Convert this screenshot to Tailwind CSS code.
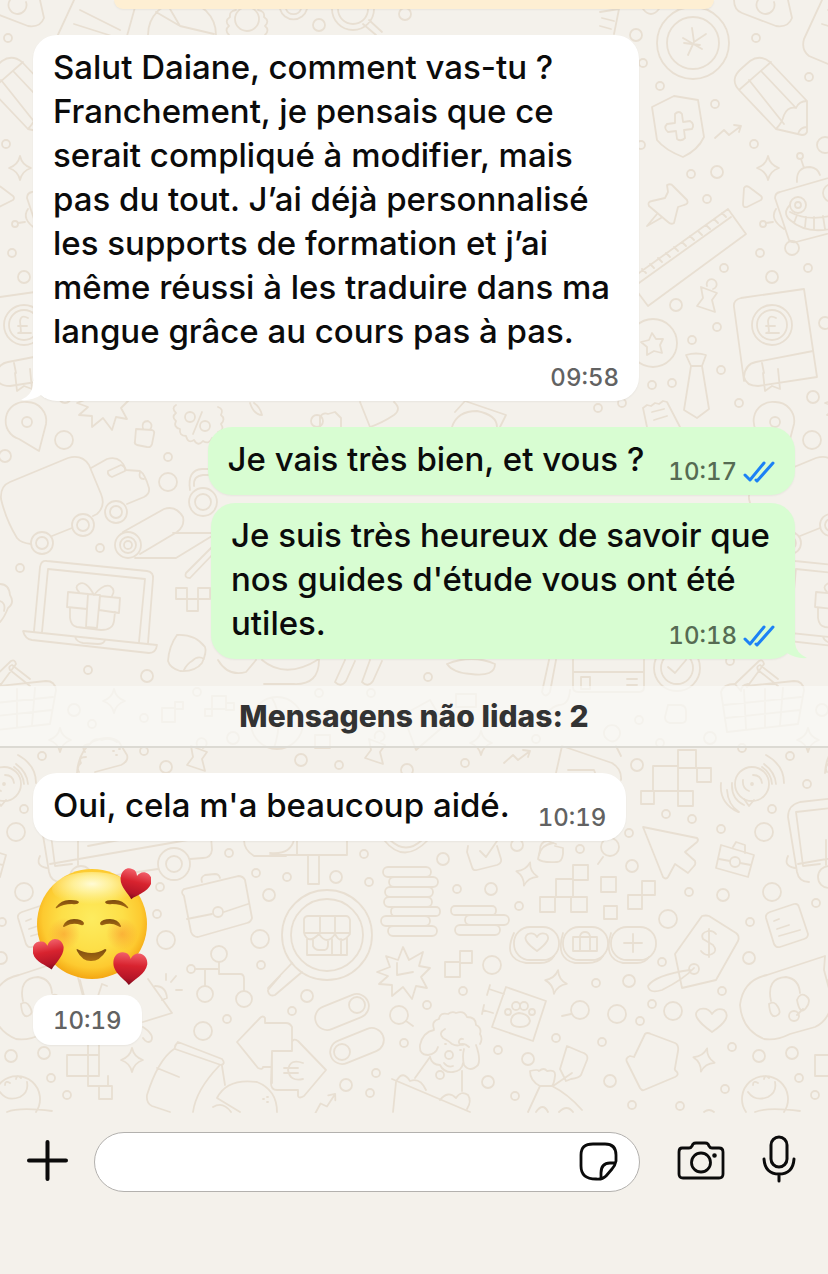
<!DOCTYPE html>
<html lang="pt">
<head>
  <meta charset="UTF-8" />
  <meta name="viewport" content="width=device-width, initial-scale=1.0" />
  <title>Conversa</title>
  <script src="https://cdn.jsdelivr.net/npm/@tailwindcss/browser@4"></script>
</head>
<body class="font-['Inter',sans-serif] antialiased bg-[#f4f1eb] text-[#0b0b0b]">
  <div class="min-h-screen flex flex-col">

    <main class="relative flex-1 overflow-hidden pb-[68px]">

      <!-- Wallpaper -->
      <svg class="absolute inset-0 w-full h-full" fill="none" stroke="#e8dfd2" stroke-width="1.800" stroke-linejoin="round" stroke-linecap="round" aria-hidden="true">
        <defs>
          <path id="spark" d="M0-12Q2-3 11 0Q2 3 0 12Q-2 3-11 0Q-2-3 0-12z" />
          <path id="trend" d="M-13 6L-4-2L1 3L13-6M6-7L13-6L11 0" />
          <path id="pushpin" d="M-7-9L9-3L4 4L7 16L-11 10L-5 2zM-1-10a5 5 0 1 1 6 3" />
          <path id="burst" d="M0-26L6-13L20-21L16-7L27-5L18 4L24 15L13 13L9 26L0 14L-11 23L-11 12L-24 11L-15 3L-26-1L-13-6L-17-17L-5-13z" />
          <g id="wheel"><circle r="11" /><circle r="6" /></g>
          <g id="dots">
            <circle cx="319" cy="25" r="6" /><circle cx="405" cy="14" r="6" /><circle cx="636" cy="35" r="6" /><circle cx="643" cy="63" r="4" />
            <circle cx="660" cy="86" r="4" /><circle cx="715" cy="104" r="4" /><circle cx="756" cy="38" r="4" /><circle cx="809" cy="77" r="4" />
            <circle cx="754" cy="144" r="4" /><circle cx="691" cy="174" r="4" /><circle cx="717" cy="172" r="6" /><circle cx="641" cy="145" r="4" />
            <circle cx="707" cy="199" r="4" /><circle cx="760" cy="253" r="4" /><circle cx="724" cy="268" r="4" /><circle cx="808" cy="268" r="4" />
            <circle cx="772" cy="277" r="6" /><circle cx="676" cy="305" r="6" /><circle cx="717" cy="327" r="4" /><circle cx="692" cy="340" r="4" />
            <circle cx="652" cy="385" r="4" /><circle cx="672" cy="383" r="4" /><circle cx="721" cy="370" r="4" /><circle cx="739" cy="403" r="4" />
            <circle cx="813" cy="397" r="6" /><circle cx="825" cy="323" r="6" /><circle cx="622" cy="403" r="4" /><circle cx="825" cy="145" r="8" />
            <circle cx="64" cy="440" r="9" /><circle cx="168" cy="457" r="4" /><circle cx="168" cy="482" r="9" /><circle cx="100" cy="548" r="4" />
            <circle cx="20" cy="568" r="4" /><circle cx="88" cy="670" r="4" /><circle cx="147" cy="676" r="6" /><circle cx="74" cy="710" r="6" />
            <circle cx="92" cy="724" r="4" /><circle cx="144" cy="718" r="4" /><circle cx="197" cy="692" r="4" /><circle cx="144" cy="751" r="4" />
            <circle cx="166" cy="767" r="6" /><circle cx="5" cy="456" r="6" /><circle cx="317" cy="421" r="6" />
            <circle cx="598" cy="408" r="4" /><circle cx="428" cy="677" r="4" /><circle cx="730" cy="661" r="4" /><circle cx="319" cy="693" r="4" />
            <circle cx="371" cy="693" r="4" /><circle cx="639" cy="720" r="4" /><circle cx="660" cy="743" r="4" /><circle cx="710" cy="738" r="6" />
            <circle cx="536" cy="739" r="4" /><circle cx="339" cy="765" r="4" /><circle cx="301" cy="760" r="6" /><circle cx="465" cy="763" r="4" />
            <circle cx="233" cy="738" r="6" /><circle cx="407" cy="770" r="6" /><circle cx="742" cy="748" r="4" />
            <circle cx="637" cy="765" r="6" /><circle cx="807" cy="784" r="4" /><circle cx="772" cy="809" r="4" /><circle cx="790" cy="756" r="4" />
            <circle cx="666" cy="814" r="4" /><circle cx="692" cy="819" r="4" /><circle cx="629" cy="833" r="4" /><circle cx="721" cy="829" r="4" />
            <circle cx="764" cy="832" r="9" /><circle cx="580" cy="849" r="4" /><circle cx="632" cy="866" r="6" /><circle cx="689" cy="892" r="4" />
            <circle cx="723" cy="895" r="6" /><circle cx="772" cy="892" r="9" /><circle cx="816" cy="903" r="4" /><circle cx="668" cy="919" r="9" />
            <circle cx="750" cy="922" r="4" /><circle cx="749" cy="958" r="6" /><circle cx="662" cy="962" r="4" /><circle cx="629" cy="981" r="6" />
            <circle cx="596" cy="983" r="4" /><circle cx="722" cy="991" r="4" /><circle cx="652" cy="1004" r="4" /><circle cx="617" cy="1014" r="9" />
            <circle cx="640" cy="1021" r="4" /><circle cx="673" cy="1011" r="9" /><circle cx="556" cy="1038" r="4" /><circle cx="602" cy="1042" r="4" />
            <circle cx="732" cy="1047" r="4" /><circle cx="759" cy="1056" r="6" /><circle cx="792" cy="1053" r="6" /><circle cx="610" cy="1081" r="6" />
            <circle cx="725" cy="1089" r="4" /><circle cx="799" cy="1078" r="4" /><circle cx="815" cy="1095" r="4" /><circle cx="632" cy="1105" r="4" />
            <circle cx="680" cy="1106" r="4" /><circle cx="364" cy="854" r="4" /><circle cx="287" cy="877" r="4" /><circle cx="336" cy="877" r="6" />
            <circle cx="369" cy="882" r="4" /><circle cx="443" cy="859" r="6" /><circle cx="457" cy="889" r="4" /><circle cx="491" cy="889" r="6" />
            <circle cx="519" cy="906" r="4" /><circle cx="492" cy="965" r="9" /><circle cx="463" cy="991" r="4" /><circle cx="307" cy="996" r="6" />
            <circle cx="292" cy="1011" r="4" /><circle cx="427" cy="1005" r="4" /><circle cx="404" cy="1043" r="4" /><circle cx="498" cy="1050" r="4" />
            <circle cx="528" cy="1059" r="6" /><circle cx="376" cy="1073" r="4" /><circle cx="488" cy="1082" r="6" /><circle cx="346" cy="1085" r="6" />
            <circle cx="370" cy="1093" r="4" /><circle cx="515" cy="1096" r="4" /><circle cx="440" cy="1075" r="4" /><circle cx="517" cy="845" r="6" />
            <circle cx="229" cy="853" r="4" /><circle cx="256" cy="873" r="4" /><circle cx="160" cy="887" r="4" />
            <circle cx="157" cy="914" r="4" /><circle cx="166" cy="940" r="9" /><circle cx="269" cy="895" r="6" /><circle cx="260" cy="939" r="9" />
            <circle cx="261" cy="965" r="4" /><circle cx="203" cy="1031" r="9" /><circle cx="227" cy="1019" r="4" />
          </g>
          <g id="doodles">
            <use href="#dots" />
            <!-- top strip -->
            <path d="M80 10L120 30M74 24L115 37M137 0L127 36M148 35a34 34 0 0 1 68 0M156 12L180 26L214 34M170 9L180 26" />
            <circle cx="247" cy="19" r="12" /><path d="M229 35q-5-5 0-9q-5-5 1-9q-1-6 6-7M265 35q5-5 0-9q5-5-1-9q1-6-6-7" />
            <path d="M280 9a14 14 0 0 0 27 0M286 9a8 8 0 0 0 15 0M332 9a21 21 0 0 0 42 0M338 9a15 15 0 0 0 30 0M363 24L376 35M369 20L382 32" />
            <path d="M600 12L619 9L614 34M602 18L614 21M600 26L611 29M643 9q8 10 16 0" />
            <!-- coin, padlock, sheet -->
            <circle cx="693" cy="43" r="36" /><circle cx="693" cy="43" r="26" />
            <path d="M692 28L694 42L706 34M694 42L688 55M683 38L702 49M684 43L700 45M734 0q0 10 8 13L776 26q12 2 16-8L788 0M758 0a9 9 0 1 0 16 2" />
            <path d="M822 0L804 39q-3 11 5 17L828 64" />
            <!-- pencil -->
            <path d="M739 90q-10-11 3-22l8-7q10-7 20 1L807 101V132q-1 3-5 3L776 129zM739 90L771 62M749 80L784 124M762 72L796 108M807 101q-8 0-11 7q-8-2-12 7q-2 8-8 14M798 134q2-7 9-7" />
            <!-- shield -->
            <path d="M652 107L674 96L698 100L704 137Q698 150 683 157Q665 150 657 140z" />
            <path d="M675 114q4-4 7 0l1 8l7-1q5 3 2 8l-8 1l1 8q-4 4-8 1l-1-8l-8 1q-5-4-1-8l8-1z" />
            <use href="#trend" x="728" y="132" /><use href="#spark" x="768" y="168" />
            <!-- pin, triangle, ruler -->
            <path d="M667 185q4-2 6 1L687 200q2 4-3 5l-6 2l-4 16q-3 2-6-1L649 206q-2-4 3-5l13-3l3-6zM657 214L647 226L661 218M744 188q2-3 5-1L761 196q2 2 0 4L747 207q-4 1-4-3z" />
            <path d="M600 301L728 209L746 234L648 306L636 290M731 217L604 308M722 213l4 4M714 219l4 4M706 225l4 4M698 231l4 4M690 236l4 4M682 242l4 4M674 247l4 4M666 253l4 4M658 258l4 4M650 264l4 4M642 269l4 4" />
            <!-- robot -->
            <circle cx="800" cy="156" r="3" /><path d="M801 159L804 168M797 182q-1-15 13-15q8 1 10 8M775 198q0-5 5-6L842 174M775 198L789 240q3 3 7 2L842 230M776 209q-7 10 8 20" />
            <circle cx="763" cy="224" r="3" /><path d="M766 223l7-1" /><circle cx="798" cy="205" r="8" /><circle cx="798" cy="205" r="3" /><circle cx="832" cy="193" r="9" />
            <path d="M790 205q-8 8 0 15q18 16 48 7M790 212q18 10 44 3M797 215l-3 8M806 217l-1 10M814 217v12M823 216l2 13" /><circle cx="792" cy="248" r="7" />
            <use href="#pushpin" x="708" y="296" />
            <!-- pound book -->
            <path d="M744 381L734 307q-1-7 7-9L804 289L817 377L758 386q-12 0-14-9q1-13 12-15L813 351M762 363l2 10M763 373l2 18l7-5l8 3l-2-20" />
            <circle cx="772" cy="325" r="20" /><circle cx="772" cy="325" r="15" /><path d="M776 318q-7-4-8 3l1 11l-3 1h13M766 326h9" />
            <!-- star coin, tie, note, map pin -->
            <circle cx="653" cy="343" r="24" /><path d="M652 333l4 6h7l-3 6l2 8l-8-2l-7 4v-8l-6-5l8-2z" />
            <path d="M686 355q10-3 20 0l-4 11h-11zM691 366L684 410L697 418L709 409L702 366M643 408l4-3l4 1l4-3l4 1l4-3l4 1L680 427M643 408L647 427M652 412l12-3M654 420l13-4" />
            <path d="M27 402a19 19 0 0 1 19 22L39 451L19 439A19 19 0 0 1 27 402z" /><circle cx="27" cy="422" r="5" />
            <use href="#burst" x="103" y="404" /><path d="M136 429l16 1q3 1 2 4l-2 10q-1 4-5 3l-10-2q-3-1-2-4zM143 429q-2-8 5-8q6 3 2 9" />
            <path d="M176 405q-5 3 0 8q-5 4 0 8q-3 6 4 8q-1 7 6 7q2 8 8 4q4 7 9 1q6 4 9-3q6 1 6-6q7-2 3-8q5-5 0-9q3-6-3-8M193 434L202 412" /><circle cx="190" cy="417" r="5" /><circle cx="205" cy="426" r="5" />
            <path d="M250 403q4 12 12 12q-2-8-8-12M320 427v-10q3-5 8-3l7-2l6 6v9M360 402L370 427q12-4 24-12q8-6 0-13M455 412L465 401L506 415L500 427M452 427q5-16 25-16q20 4 20 16" />
            <!-- truck -->
            <path d="M17 538Q6 520 1 499Q0 486 10 482L68 458Q82 454 89 465L101 494Q106 506 97 514L93 516M72 528L52 536M31 544Q21 543 17 538M91 468L107 459Q121 455 126 470L140 471Q145 474 149 488Q150 494 144 497L127 504" />
            <path d="M108 471l13-6q5 2 4 6l-13 6q-5-2-4-6zM140 472q-2 7 4 7" />
            <use href="#wheel" x="42" y="543" /><use href="#wheel" x="83" y="525" /><use href="#wheel" x="116" y="512" />
            <!-- scroll -->
            <circle cx="128" cy="545" r="13" /><circle cx="128" cy="545" r="8" /><circle cx="128" cy="545" r="4" />
            <path d="M123 532L164 509Q176 505 183 517Q185 526 177 532L140 554M173 533H212M135 558H176L212 536M212 547l-26 26q-2 5 4 5l24-25" />
            <circle cx="203" cy="502" r="14" /><circle cx="203" cy="502" r="8" /><path d="M190 490q-3-20 12-21h12M194 486q-1-10 9-11h11" />
            <!-- laptop with gift -->
            <path d="M34 631L40 567q1-7 7-6L147 571q7 1 6 8L148 643M42 632L48 569L145 579L139 642M23 631L157 645q-1 8-8 8L32 640q-7-1-9-9zM75 637q2 5 8 6l15 1q6 0 7-4" />
            <path d="M68 592l20 2l-1 15l-20-2zM88 594l12 1l-3 33l-11-1zM100 596l20 2l-1 15l-20-3zM70 608l0 10q1 8 7 9l24 3q12 0 13-9l1-9M94 595q-8-15-15-11q-5 3 0 8M94 595q9-11 16-9q6 4 2 10" />
            <path d="M176 588h11v11h-11zM187 599h11v12h-11zM198 588h12v11h-12zM177 635q18-1 28 12q2 5-3 16q-7 9-22 8q-10-3-12-10q1-15 9-26M204 659q-6-4-12 2q-5 3-8 9" />
            <path d="M0 584q9 0 10 11q5 8-2 13q-4 10-8 14M0 601q6 2 4 10" />
            <!-- baskets -->
            <path d="M748 684q-7 1-7 7M741 691L735 684q-12 0-14 8L727 732L798 724L804 690q-1-9-10-9L746 686M724 705l77-8M726 718l74-8M744 690l2 39M765 689v38M783 688l-3 37M747 687L764 664q-1-5-5-3L736 683M778 679L760 665q-4 1-2 5L778 686" />
            <use href="#spark" x="114" y="701" /><use href="#spark" x="60" y="740" /><use href="#spark" x="481" y="743" />
            <path d="M162 708h13v14h-13zM175 702h8v7h-8zM212 696h14v13h-14zM205 709h7v7h-7zM226 703h8v7h-8zM456 694h20v13h-20zM315 735h15v13h-15z" />
            <path d="M77 773q1-20 15-31q17-8 27 0L127 755q2 6-6 10L95 772M85 752q-5-7 5-8q4-7 12-4q8-3 15 2M86 757q-8 0-5 6q-5 4-2 9M113 751h1M119 749h1M116 755h1" />
            <use href="#pushpin" x="198" y="755" /><use href="#pushpin" x="376" y="748" /><use href="#trend" x="517" y="757" />
            <circle cx="277" cy="723" r="26" /><path d="M272 698q12 20 2 50M403 715L430 700L445 725L416 750z" />
            <path d="M218 660q10 17 28 12l10-12M262 660q24 20 57-1M319 660q0 25-25 24h-30M345 660l-10 22q6 6 11-1l9-20M370 660l-8 22q6 6 11-1l9-20M447 664q25-10 48 0q0 13-24 10q-18-1-24-10" />
            <path d="M573 660v27q0 5 5 5h61q5 0 5-5V660M573 672h71M581 677h9v12h-9zM627 679h10M627 685h10M549 660l-7 32q3 7 8 0l6-32M570 690q-1 15-11 15q-13 3-15 20" />
            <circle cx="677" cy="668" r="23" /><circle cx="677" cy="668" r="16" /><path d="M668 667l7 6l11-13M668 705h13q5 1 5 6v8q0 4-5 4h-11q-5-1-5-6z" />
            <path d="M556 773L562 746L612 763Q622 769 621 780M568 770h26l3 8M605 737a8 8 0 1 1 14 0q-6 9-14 0M616 746l5 10" />
            <!-- pixels and broadcast -->
            <path d="M653 766h25v25h-25zM678 750h18v18h-18zM697 768h14v14h-14zM641 791h13v13h-13zM678 791h15v15h-15z" />
            <circle cx="752" cy="784" r="17" /><circle cx="752" cy="784" r="1" /><path d="M744 799l5 7l5-6M743 780q-1 8 6 11M753 775q8 0 9 8M764 764q11 8 12 20M766 755q18 10 18 28M732 783q-1 16 12 22M727 790q1 15 12 22M721 783q-2 20 17 29M762 767q9 6 10 17" />
            <!-- cursor, briefcases, notes -->
            <path d="M643 827L697 838q2 2 0 4L685 852L695 861q1 3-1 5L688 873L675 864L668 877q-2 3-5 0z" />
            <path d="M721 845L754 855L748 877L716 868zM733 847l3-5l9 3v8M719 859L730 861M740 863l11 2" /><circle cx="735" cy="862" r="5" />
            <path d="M766 918q-1-4 4-6l24-8q4-1 5 3l9 27q0 4-4 5l-24 8q-4 1-6-3zM774 921l5-2M777 929l12-4M779 936l21-6" />
            <path d="M184 896q-4-4 0-7L238 876q5 0 7 4L252 918q-1 4-5 5L198 937q-5 0-7-5zM187 919L212 914M224 912L248 904M202 882q-2-5 3-7l10-1q4 0 5 4" /><circle cx="218" cy="912" r="5" />
            <path d="M835 798L800 802q-12 3-12 15L797 872q2 10 12 10M796 812L832 808M796 812L803 866L820 864M788 856q-5 10 7 12" /><circle cx="829" cy="877" r="11" />
            <path d="M78 840v25M50 864L211 836L212 850q-1 8-9 8L190 859M158 869L96 878M88 846L150 834" />
            <circle cx="174" cy="864" r="16" /><circle cx="174" cy="864" r="8" />
            <path d="M244 840q0 10 10 16h32" />
            <!-- sign and squares -->
            <path d="M270 855H347V840M297 840v15M308 855v29h11V855M270 853q20 2 24-13M556 844l-9-3q-7 1-7 9l-2 9q4 4 19 3q5 0 6-8v-6l-8-2M603 857l-5 7" /><circle cx="610" cy="847" r="9" />
            <path d="M573 865h15v15h-15zM556 879h17v18h-17zM540 897h15v15h-15zM571 897h16v15h-16zM601 877h15v15h-15zM604 906h13v13h-13zM642 881h13v14h-13zM628 895h14v14h-14zM445 962h15v15h-15zM460 951h12v12h-12z" />
            <path d="M384 840q20 25 44 0M390 840q16 15 32 0M468 846l-1 6l5 15q1 4 5 3l20-5q5-2 4-6l-4-13M480 851l6 6l11-16M539 855q2-10 14-12" />
            <use href="#spark" x="527" y="874" transform="rotate(15 527 874)" />
            <!-- shop under the glass -->
            <circle cx="327" cy="935" r="45" /><circle cx="327" cy="935" r="36" />
            <path d="M304 919q1-3 4-3h38q3 0 4 4v13h-46zM304 933q4 12 15 1q8 12 16 0q6 12 15 0M307 939v16h40v-17M320 916v17M335 916v17M313 940v6q2 4 6 4h6q3-1 3-5v-5M332 939v16M341 939v16M292 963L268 988M302 972L275 995q-6 2-7-4" />
            <!-- coins -->
            <rect x="383" y="867" width="48" height="10" rx="5" /><rect x="389" y="877" width="49" height="10" rx="5" /><rect x="385" y="887" width="48" height="10" rx="5" /><rect x="384" y="897" width="48" height="10" rx="5" />
            <rect x="391" y="907" width="49" height="9" rx="4" /><rect x="381" y="916" width="49" height="10" rx="5" /><rect x="388" y="926" width="49" height="10" rx="5" />
            <rect x="451" y="906" width="45" height="9" rx="4" /><rect x="465" y="915" width="44" height="10" rx="5" /><rect x="455" y="925" width="45" height="10" rx="5" />
            <rect x="514" y="927" width="45" height="33" rx="16" /><rect x="563" y="927" width="45" height="33" rx="16" /><rect x="611" y="927" width="45" height="33" rx="16" />
            <path d="M514 933q-12 26 12 30h14q10 0 14-7M563 933q-8 26 12 30h12q12 0 16-7M611 933q-8 26 12 30h14q8 0 12-6M537 951q-17-12-9-17q6-2 9 3q3-5 9-3q7 5-9 17M573 937h24v14h-24zM580 937v14M590 937v14M580 936q1-4 5-4t5 4M624 943h18M633 934v18" />
            <!-- price tag -->
            <path d="M702 916q4-1 7 0L736 933q4 3 2 8L716 980L682 988L675 954zM716 934q-3-4-8-3q-8 2-5 8l10 6q5 6-1 9q-6 3-11-3M709 929v28M690 970Q655 975 648 986q1 8 14 4Q684 979 694 968" /><circle cx="694" cy="969" r="5" />
            <use href="#burst" x="403" y="973" /><path d="M397 963v12l16-3" />
            <!-- switches -->
            <rect x="-28" y="-12" width="56" height="24" rx="12" transform="translate(342 1012) rotate(-22)" /><circle cx="357" cy="1005" r="8" />
            <rect x="-28" y="-12" width="56" height="24" rx="12" transform="translate(357 1046) rotate(-22)" /><circle cx="342" cy="1052" r="8" />
            <circle cx="399" cy="1015" r="9" /><path d="M406 1021l7 5M571 1014l-9 2" /><circle cx="580" cy="1010" r="9" />
            <!-- poodle -->
            <path d="M434 1029q-3-8 5-10q1-7 9-5q4-3 8-1q8-3 11 4q9 0 9 8q6 3 4 9q3 5 0 10M434 1030q-11 2-14 15q-1 10 8 10q8-1 10-8M476 1045q5 14 2 20q-8 8-14 0q-2-9 0-16M430 1057q2 8 10 8q4 8 13 7q9-1 10-9M445 1029q-7 4-2 9q6 3 9 6q6 3 9 0q4-1 8 3M463 1039a3 3 0 1 0 1 5M445 1044h1M460 1050h1" /><circle cx="449" cy="1055" r="4" />
            <path d="M444 1063q4 5 9 3M430 1057L415 1078M462 1071v20M440 1100q8-10 16-2q5-8 12-3q4 6-1 14" />
            <!-- paw sign -->
            <path d="M506 987L546 1001L533 1041L492 1027zM490 985l-3 10M489 989l15 5M484 1005l-2 9M483 1010l10 3M511 1022q0-8 8-9q10 1 11 8q-1 6-10 6q-8 0-9-5" /><circle cx="508" cy="1012" r="3" /><circle cx="516" cy="1006" r="4" /><circle cx="524" cy="1006" r="4" /><circle cx="532" cy="1012" r="3" />
            <path d="M392 1079L470 1112M396 1082L393 1112M397 1080q6-10 13 1q10-4 16 9M540 1086L528 1112M540 1086q-10-5-10-15q8-2 9 0q5-4 8 0q9-2 8 5q-1 8-3 10zM552 1086q16 8 30 24M572 1073L553 1086M567 1046l14 6q8 2 6 8l-6 15q-2 3-10 4l-5 2l-6-12zM536 1112q7-10 12 0M559 1112q8-8 14 0" />
            <use href="#trend" x="325" y="1104" transform="rotate(-20 325 1104)" />
            <!-- arrows -->
            <path d="M272 1051h20V1042q1-4 6-1L326 1070L304 1096q-5 3-6 0v-6h-21q-6 0-6-7zM303 1063q-13-5-15 7q2 12 15 9M284 1068h14M284 1073h14M272 1051V1083M292 1050V1027q-2-4-6-4H265V1018q-2-3-5 0L237 1042L258 1068q5 2 5-1h8" />
            <use href="#spark" x="132" y="1060" /><use href="#spark" x="556" y="982" transform="rotate(10 556 982)" /><use href="#spark" x="704" y="1060" transform="rotate(15 704 1060)" />
            <path d="M712 1032q-24-17-12-23q8-2 12 5q5-7 12-4q9 8-12 22zM645 1034q2-2 6 0L675 1043q4 2 3 8l-3 17q-1 2 2 4q2 3-2 5L644 1090q-2 1-4-2L627 1062q-2-4 3-6l4 1z" />
            <!-- headset balloon -->
            <path d="M825 956L767 975Q743 980 740 1005Q742 1030 764 1039Q776 1041 790 1034L815 1027Q830 1020 832 1000L824 970z" /><path d="M771 1001q-5-23 15-24q13 2 14 16M797 1000q3-8 9-4t0 12t-9-8M769 1004q5-4 9 3t-2 9t-7-12M803 1009l-6 6" /><circle cx="794" cy="1016" r="5" />
            <!-- org chart, megaphone -->
            <path d="M219 962v12h21q4 0 4 5v12M195 969h24M205 969v17" /><circle cx="219" cy="954" r="8" /><circle cx="191" cy="969" r="4" /><circle cx="205" cy="994" r="8" /><circle cx="244" cy="999" r="8" />
            <path d="M148 979L172 1013L143 1022M80 980l4 16M98 996l4-12l5 2M155 986q11 0 12 12l-5 2M166 980v-6M171 982l5-6M176 990h6M143 1027q12 8 8 14q-4 3-8-3M268 990L280 976" />
            <!-- bag, burger, smiley -->
            <path d="M88 1045v31M67 1055h32M67 1055v21h32V1045M88 1076v10h20v-10M99 1086v13h13v-13zM178 1042l44 17q4 5-1 6l-46-16q-1-3 3-7zM174 1049Q158 1060 147 1095Q146 1103 152 1106L170 1112M157 1068l22 9M222 1066l3 19M219 1066Q196 1090 193 1112M217 1098q10-20 40-16q20 8 20 30M217 1098L240 1112M213 1107q10-6 18 5M263 1099h1M267 1097h1M267 1102h1" />
            <path d="M746 1112a23 23 0 1 1 38 0M748 1092q7 10 20 5q9-5 7-15M753 1085q0-5 5-2M764 1079q1-5 5-1M755 1112q12-5 45-1M704 1112q5-4 10 0" />
          </g>
        </defs>
        <use href="#doodles" />
        <use href="#doodles" x="748" />
        <use href="#doodles" x="-748" />
      </svg>

      <!-- Bottom edge of the system notice above -->
      <div class="relative mx-auto w-[600px] h-[9px] rounded-b-xl bg-[#feefd3] shadow-xs"></div>

      <section class="relative mt-[26px] px-[33px] flex flex-col items-start">
        <div class="relative w-[606px] rounded-3xl bg-white pl-5 pr-5 pt-[10px] pb-[7px] shadow-xs">
          <svg class="absolute left-[-12px] bottom-0 w-6 h-5" viewBox="0 0 24 20" fill="#fff" aria-hidden="true"><path d="M12 0V4Q11 14 0 19Q11 20 20 14L24 17V0z" /></svg>
          <p class="text-[33px] leading-[44px] font-medium">Salut Daiane, comment vas-tu ? Franchement, je pensais que ce serait compliqué à modifier, mais pas du tout. J’ai déjà personnalisé les supports de formation et j’ai même réussi à les traduire dans ma langue grâce au cours pas à pas.</p>
          <time class="mt-[9px] block text-right text-2xl font-medium tabular-nums text-[#626262]">09:58</time>
        </div>

        <div class="mt-[26px] self-end flex items-end rounded-3xl bg-[#d8fdd2] pl-5 pr-5 pt-[10px] pb-[7px] shadow-xs">
          <p class="mb-[7px] text-[33px] leading-[44px] font-medium">Je vais très bien, et vous ?</p>
          <time class="ml-6 text-2xl font-medium tabular-nums text-[#566b53]">10:17</time>
          <svg class="ml-[6px] mb-[5px] w-8 h-[22px]" viewBox="0 0 32 22" fill="none" stroke="#1c81f5" stroke-width="3" stroke-linecap="round" stroke-linejoin="round" role="img" aria-label="Lida"><path d="M2 14L7 19L21 2M13 19L14 20L30 2" /></svg>
        </div>

        <div class="relative mt-2 self-end w-[584px] rounded-3xl bg-[#d8fdd2] pl-5 pr-5 pt-[10px] pb-[7px] shadow-xs">
          <svg class="absolute right-[-12px] bottom-0 w-6 h-5" viewBox="0 0 24 20" fill="#d8fdd2" aria-hidden="true"><path d="M12 0V4Q13 14 24 19Q13 20 4 14L0 17V0z" /></svg>
          <p class="flow-root text-[33px] leading-[44px] font-medium">
            Je suis très heureux de savoir que nos guides d'étude vous ont été utiles.
            <span class="float-right mt-[19px] flex items-end">
              <time class="text-2xl font-medium tabular-nums text-[#566b53]">10:18</time>
              <svg class="ml-[6px] mb-[5px] w-8 h-[22px]" viewBox="0 0 32 22" fill="none" stroke="#1c81f5" stroke-width="3" stroke-linecap="round" stroke-linejoin="round" role="img" aria-label="Lida"><path d="M2 14L7 19L21 2M13 19L14 20L30 2" /></svg>
            </span>
          </p>
        </div>
      </section>

      <h2 class="relative mt-[27px] h-[62px] flex items-center justify-center border-b-2 border-[#dcdad3] bg-[#f9f9f7]/70 text-[30px] font-extrabold text-[#333]">Mensagens não lidas: 2</h2>

      <section class="relative mt-[25px] px-[33px] flex flex-col items-start">
        <div class="flex items-end rounded-3xl bg-white pl-5 pr-5 pt-[10px] pb-[7px] shadow-xs">
          <p class="mb-[7px] text-[33px] leading-[44px] font-medium">Oui, cela m'a beaucoup aidé.</p>
          <time class="ml-7 text-2xl font-medium tabular-nums text-[#626262]">10:19</time>
        </div>

        <!-- Smiling face with hearts -->
        <svg class="mt-[26px] w-[118px] h-[118px]" viewBox="0 0 118 118" role="img" aria-label="🥰">
          <defs>
            <radialGradient id="face" cx=".5" cy=".45" r=".56"><stop offset="0" stop-color="#fdec5f" /><stop offset=".5" stop-color="#fddf48" /><stop offset=".8" stop-color="#fdca30" /><stop offset="1" stop-color="#f3a30f" /></radialGradient>
            <radialGradient id="shine" cx=".5" cy=".35" r=".6"><stop offset="0" stop-color="#fffbd6" /><stop offset=".4" stop-color="#fff6ae" stop-opacity=".8" /><stop offset="1" stop-color="#fff3a0" stop-opacity="0" /></radialGradient>
            <radialGradient id="blush"><stop offset="0" stop-color="#f88a2a" stop-opacity=".5" /><stop offset="1" stop-color="#f88a2a" stop-opacity="0" /></radialGradient>
            <linearGradient id="love" x2="0" y2="1"><stop offset="0" stop-color="#f2606a" /><stop offset=".4" stop-color="#d8232f" /><stop offset=".8" stop-color="#b51527" /><stop offset="1" stop-color="#7c0b1c" /></linearGradient>
            <linearGradient id="brown" x2="0" y2="1"><stop offset="0" stop-color="#7d4c10" /><stop offset="1" stop-color="#a86c12" /></linearGradient>
            <path id="heart" fill="url(#love)" d="M0 17C-5 11-17 6-17-5C-17-12-12-16-7-15C-3-15-1-12 0-9C1-12 4-15 8-15C13-15 17-11 17-5C16 5 5 11 0 17z" />
          </defs>
          <circle cx="59" cy="57" r="55" fill="url(#face)" />
          <ellipse cx="59" cy="22" rx="40" ry="17" fill="url(#shine)" />
          <circle cx="31" cy="67" r="16" fill="url(#blush)" /><circle cx="89" cy="67" r="16" fill="url(#blush)" />
          <g fill="url(#brown)">
            <path d="M23 40Q29 32 38 33Q45 33 46 35Q45 38 39 37Q30 37 24 41Q22 42 23 40z" /><path d="M95 40Q89 32 80 33Q73 33 72 35Q73 38 79 37Q88 37 94 41Q96 42 95 40z" />
            <path d="M30 59Q33 52 41 52Q49 52 51 56Q51 59 48 58Q40 55 33 59Q30 61 30 59z" /><path d="M88 59Q85 52 77 52Q69 52 67 56Q67 59 70 58Q78 55 85 59Q88 61 88 59z" />
            <path d="M44 82Q59 90 72 82Q74 82 73 84Q67 94 58 94Q49 94 44 84Q43 82 44 82z" />
          </g>
          <use href="#heart" transform="translate(102 17) rotate(14) scale(.92)" />
          <use href="#heart" transform="translate(16 87) rotate(-10) scale(.92)" />
          <use href="#heart" transform="translate(97 101) rotate(4)" />
        </svg>

        <div class="mt-[10px] rounded-[18px] bg-white px-5 pt-[10px] pb-2 shadow-xs">
          <time class="block text-2xl font-medium tabular-nums text-[#626262]">10:19</time>
        </div>
      </section>
    </main>

    <!-- Composer -->
    <footer class="h-[161px] shrink-0 flex items-start bg-[#f4f1eb] pt-[19px] pl-[27px] pr-8">
      <button type="button" aria-label="Anexar" class="mt-2 w-[41px] h-[41px]">
        <svg viewBox="0 0 41 41" fill="none" stroke="#0b0b0b" stroke-width="4" stroke-linecap="round"><path d="M20.500 2V39M2 20.500H39" /></svg>
      </button>
      <div class="ml-[26px] flex h-[60px] min-w-0 flex-1 items-center rounded-full border border-[#b3b1ae] bg-white pl-6 pr-5">
        <input type="text" aria-label="Mensagem" class="min-w-0 flex-1 bg-transparent text-[33px] outline-none" />
        <button type="button" aria-label="Figurinhas" class="w-10 h-10">
          <svg viewBox="0 0 40 40" fill="none" stroke="#0b0b0b" stroke-width="2.800" stroke-linejoin="round"><path d="M14 2H26Q37 2 37 13V19Q36 24 33 27L27 34Q23 38 17 37Q2 37 2 24V13Q2 2 14 2zM36 21H31Q22 21 22 31V36" /></svg>
        </button>
      </div>
      <button type="button" aria-label="Câmera" class="ml-[37px] mt-[9px] w-12 h-[39px]">
        <svg viewBox="0 0 48 39" fill="none" stroke="#0b0b0b" stroke-width="2.800" stroke-linejoin="round"><path d="M5 7H12Q14 7 15 5L16 3Q17 2 19 2H28Q30 2 31 3L32 5Q33 7 35 7H42Q46 7 46 11V33Q46 37 42 37H6Q2 37 2 33V11Q2 7 5 7z" /><circle cx="24" cy="21.500" r="9.500" /><circle cx="37.500" cy="14.500" r="1.300" fill="#0b0b0b" stroke-width="2" /></svg>
      </button>
      <button type="button" aria-label="Gravar áudio" class="ml-[37px] mt-[3px] w-[34px] h-12">
        <svg viewBox="0 0 34 48" fill="none" stroke="#0b0b0b" stroke-width="3" stroke-linecap="round"><rect x="9" y="2" width="16" height="30" rx="8" /><path d="M2 24Q3 39 17 39Q31 39 32 24M17 39V46" /></svg>
      </button>
    </footer>
  </div>
</body>
</html>
